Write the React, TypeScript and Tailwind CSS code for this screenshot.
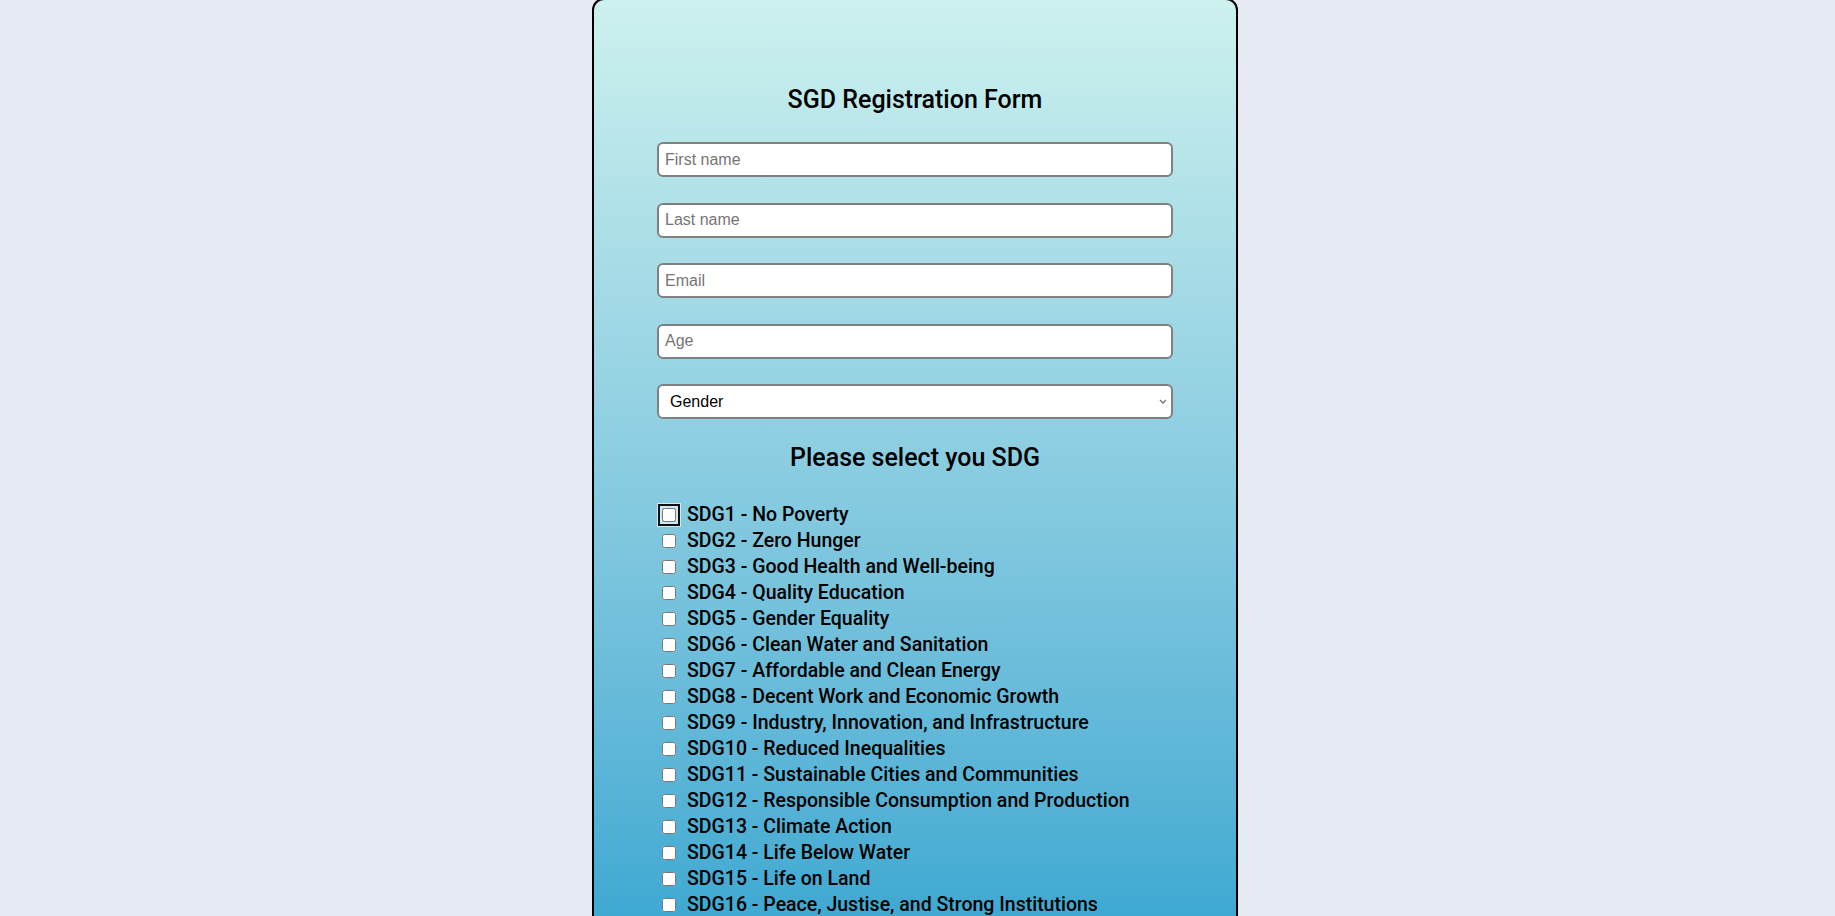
import { useState } from 'react'

const SDGS = [
  'SDG1 - No Poverty',
  'SDG2 - Zero Hunger',
  'SDG3 - Good Health and Well-being',
  'SDG4 - Quality Education',
  'SDG5 - Gender Equality',
  'SDG6 - Clean Water and Sanitation',
  'SDG7 - Affordable and Clean Energy',
  'SDG8 - Decent Work and Economic Growth',
  'SDG9 - Industry, Innovation, and Infrastructure',
  'SDG10 - Reduced Inequalities',
  'SDG11 - Sustainable Cities and Communities',
  'SDG12 - Responsible Consumption and Production',
  'SDG13 - Climate Action',
  'SDG14 - Life Below Water',
  'SDG15 - Life on Land',
  'SDG16 - Peace, Justise, and Strong Institutions',
  'SDG17 - Partnerships for the Goals',
]

const inputCls =
  "h-[35px] w-full rounded-[6px] border-2 border-[#808080] bg-white px-[6px] font-['Liberation_Sans',Arial,sans-serif] text-[16px] text-black outline-none placeholder:text-[#757575]"

export default function App() {
  const [picked, setPicked] = useState<string[]>([])

  const toggle = (s: string) =>
    setPicked((p) => (p.includes(s) ? p.filter((x) => x !== s) : [...p, s]))

  return (
    <div className="flex min-h-screen justify-center bg-[#e6ebf3] pr-[5px]">
      <form
        className="mt-[-2px] flex w-[646px] flex-col rounded-[12px] border-2 border-black bg-[#3ea9d2] bg-linear-to-b from-[#cdf1ee] to-[#3ea9d2] bg-[length:100%_920px] bg-no-repeat px-[63px] pt-[84px] pb-16 font-['Roboto',sans-serif] text-black"
        onSubmit={(e) => e.preventDefault()}
      >
        {/* Heading */}
        <h2 className="text-center text-[25px] leading-8 font-medium">SGD Registration Form</h2>

        {/* Personal details */}
        <div className="mt-[26px] flex flex-col gap-[25.5px]">
          <input className={inputCls} type="text" placeholder="First name" />
          <input className={inputCls} type="text" placeholder="Last name" />
          <input className={inputCls} type="email" placeholder="Email" />
          <input className={inputCls} type="number" placeholder="Age" />
          <div className="relative">
            <select
              className="h-[35px] w-full appearance-none rounded-[6px] border-2 border-[#808080] bg-white pl-[11px] pr-6 font-['Liberation_Sans',Arial,sans-serif] text-[16px] text-black outline-none"
              defaultValue=""
            >
              <option value="">Gender</option>
              <option value="female">Female</option>
              <option value="male">Male</option>
              <option value="other">Other</option>
            </select>
            <svg
              className="pointer-events-none absolute right-[6px] top-[15px] h-[5px] w-[8px]"
              viewBox="0 0 8 5"
              fill="none"
              stroke="#6f6f6f"
              strokeWidth="1.3"
            >
              <path d="M1 1l3 3 3-3" />
            </svg>
          </div>
        </div>

        <h2 className="mt-[23px] text-center text-[25px] leading-8 font-medium">Please select you SDG</h2>

        {/* SDG list */}
        <div className="mt-[28px] flex flex-col">
          {SDGS.map((s, i) => (
            <label key={s} className="flex h-[26px] items-center text-[19.5px] leading-[26px] font-medium">
              <input
                type="checkbox"
                checked={picked.includes(s)}
                onChange={() => toggle(s)}
                className={
                  i === 0
                    ? 'ml-[5px] mr-[11px] h-[14px] w-[14px] rounded-[2px] outline-2 outline-offset-2 outline-[#101010] shadow-[0_0_0_5px_rgba(255,255,255,0.6)]'
                    : 'ml-[5px] mr-[11px] h-[14px] w-[14px]'
                }
              />
              <span>{s}</span>
            </label>
          ))}
        </div>

        <button
          type="submit"
          className="mx-auto mt-8 rounded-[6px] border-2 border-black bg-white px-8 py-2 text-[18px] font-medium"
        >
          Submit
        </button>
      </form>
    </div>
  )
}
